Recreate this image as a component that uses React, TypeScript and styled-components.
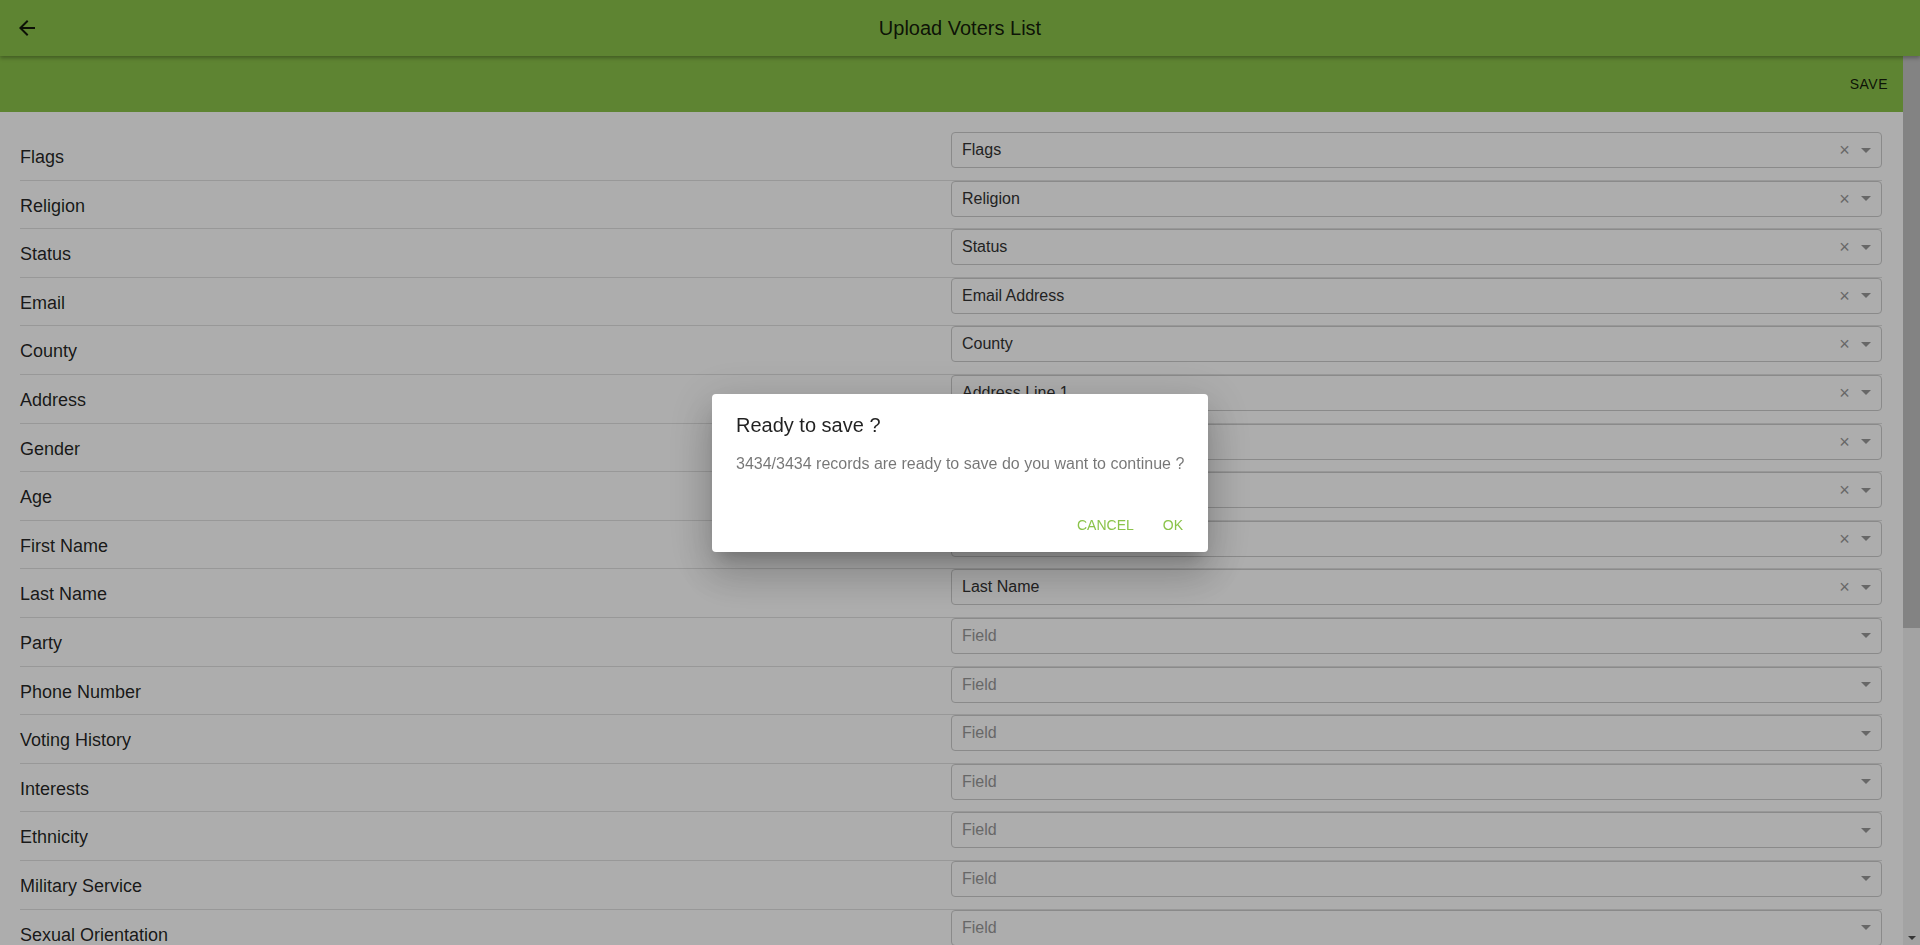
import { FC } from 'react'
import styled, { createGlobalStyle } from 'styled-components'

type FieldRow = {
  label: string
  value?: string
}

const rows: FieldRow[] = [
  { label: 'Flags', value: 'Flags' },
  { label: 'Religion', value: 'Religion' },
  { label: 'Status', value: 'Status' },
  { label: 'Email', value: 'Email Address' },
  { label: 'County', value: 'County' },
  { label: 'Address', value: 'Address Line 1' },
  { label: 'Gender', value: 'Gender' },
  { label: 'Age', value: 'Age' },
  { label: 'First Name', value: 'First Name' },
  { label: 'Last Name', value: 'Last Name' },
  { label: 'Party' },
  { label: 'Phone Number' },
  { label: 'Voting History' },
  { label: 'Interests' },
  { label: 'Ethnicity' },
  { label: 'Military Service' },
  { label: 'Sexual Orientation' },
  { label: 'Date of Birth' },
  { label: 'Zip Code' },
  { label: 'City' },
  { label: 'State' },
  { label: 'Precinct' },
  { label: 'Voter ID' },
  { label: 'Middle Name' },
  { label: 'Registration Date' },
  { label: 'Employer' },
]

const GlobalStyle = createGlobalStyle`
  html, body {
    margin: 0;
    padding: 0;
    height: 100%;
    overflow: hidden;
  }

  body {
    font-family: 'Liberation Sans', Arial, sans-serif;
    background: #fff;
    color: rgba(0, 0, 0, 0.87);
  }

  * {
    box-sizing: border-box;
  }
`

const BackIcon: FC = () => (
  <svg width="24" height="24" viewBox="0 0 24 24" fill="currentColor">
    <path d="M20 11H7.83l5.59-5.59L12 4l-8 8 8 8 1.41-1.41L7.83 13H20v-2z" />
  </svg>
)

const App: FC = () => {
  return (
    <>
      <GlobalStyle />
      <Page>
        <AppBar>
          <BackButton>
            <BackIcon />
          </BackButton>
          <AppTitle>Upload Voters List</AppTitle>
        </AppBar>

        <Body>
          <Scroller>
            <ActionBar>
              <SaveButton>SAVE</SaveButton>
            </ActionBar>

            <FieldList>
              {rows.map((row) => (
                <Row key={row.label}>
                  <Label>{row.label}</Label>
                  <Select>
                    <SelectValue $placeholder={!row.value}>{row.value ?? 'Field'}</SelectValue>
                    {row.value && <ClearMark>×</ClearMark>}
                    <ArrowWrap>
                      <Arrow />
                    </ArrowWrap>
                  </Select>
                </Row>
              ))}
            </FieldList>
          </Scroller>

          {/* window scrollbar, drawn since the native one is hidden */}
          <ScrollRail>
            <ScrollThumb />
            <ScrollDown>
              <ScrollArrow />
            </ScrollDown>
          </ScrollRail>
        </Body>
      </Page>

      <Backdrop>
        <Dialog>
          <DialogTitle>Ready to save ?</DialogTitle>
          <DialogText>3434/3434 records are ready to save do you want to continue ?</DialogText>
          <DialogActions>
            <TextButton>CANCEL</TextButton>
            <TextButton>OK</TextButton>
          </DialogActions>
        </Dialog>
      </Backdrop>
    </>
  )
}

const Page = styled.div`
  display: flex;
  flex-direction: column;
  height: 100vh;
`

const AppBar = styled.header`
  position: relative;
  z-index: 2;
  display: flex;
  align-items: center;
  justify-content: center;
  flex: 0 0 56px;
  height: 56px;
  background: #8bc34a;
  box-shadow: 0 2px 4px rgba(0, 0, 0, 0.3);
`

const BackButton = styled.button`
  position: absolute;
  left: 15px;
  top: 16px;
  display: flex;
  padding: 0;
  border: none;
  background: none;
  color: rgba(0, 0, 0, 0.87);
`

const AppTitle = styled.h1`
  margin: 0;
  font-size: 20px;
  font-weight: 400;
  color: rgba(0, 0, 0, 0.87);
`

const Body = styled.div`
  flex: 1;
  display: flex;
  min-height: 0;
`

const Scroller = styled.main`
  flex: 1;
  overflow-y: auto;
  scrollbar-width: none;

  &::-webkit-scrollbar {
    display: none;
  }
`

const ScrollRail = styled.div`
  display: flex;
  flex-direction: column;
  flex: 0 0 17px;
  background: #f1f1f1;
`

const ScrollThumb = styled.div`
  height: 572px;
  background: #c1c1c1;
`

const ScrollDown = styled.div`
  display: flex;
  align-items: center;
  justify-content: center;
  height: 17px;
  margin-top: auto;
`

const ScrollArrow = styled.span`
  width: 0;
  height: 0;
  margin-top: 3px;
  border-style: solid;
  border-width: 4px 4px 0;
  border-color: #505050 transparent transparent;
`

const ActionBar = styled.div`
  display: flex;
  align-items: center;
  justify-content: flex-end;
  height: 56px;
  padding-right: 15px;
  background: #8bc34a;
`

const SaveButton = styled.button`
  padding: 0;
  border: none;
  background: none;
  font-family: inherit;
  font-size: 14px;
  letter-spacing: 0.5px;
  color: rgba(0, 0, 0, 0.87);
`

const FieldList = styled.div`
  padding: 20px 21px 16px 20px;
`

const Row = styled.div`
  display: grid;
  grid-template-columns: 1fr 1fr;
  height: 48.6px;
  border-bottom: 1px solid #e0e0e0;
`

const Label = styled.div`
  padding-top: 15px;
  font-size: 18px;
  color: rgba(0, 0, 0, 0.87);
`

const Select = styled.div`
  display: flex;
  align-items: center;
  min-width: 0;
  height: 36px;
  padding-left: 10px;
  border: 1px solid #ccc;
  border-radius: 4px;
  background: #fff;
`

const SelectValue = styled.span<{ $placeholder: boolean }>`
  flex: 1;
  font-size: 16px;
  color: ${(props) => (props.$placeholder ? '#999' : '#333')};
`

const ClearMark = styled.span`
  width: 17px;
  margin-right: 3px;
  text-align: center;
  font-size: 18px;
  line-height: 1;
  color: #999;
`

const ArrowWrap = styled.span`
  display: flex;
  justify-content: center;
  width: 25px;
  padding-right: 5px;
`

const Arrow = styled.span`
  width: 0;
  height: 0;
  border-style: solid;
  border-width: 5px 5px 0;
  border-color: #999 transparent transparent;
`

const Backdrop = styled.div`
  position: fixed;
  inset: 0;
  z-index: 10;
  display: flex;
  align-items: center;
  justify-content: center;
  background: rgba(0, 0, 0, 0.32);
`

const Dialog = styled.div`
  width: 496px;
  padding: 20px 24px 19px 24px;
  border-radius: 4px;
  background: #fff;
  box-shadow:
    0 11px 15px -7px rgba(0, 0, 0, 0.2),
    0 24px 38px 3px rgba(0, 0, 0, 0.14),
    0 9px 46px 8px rgba(0, 0, 0, 0.12);
`

const DialogTitle = styled.h2`
  margin: 0 0 18px;
  font-size: 20px;
  font-weight: 400;
  color: rgba(0, 0, 0, 0.87);
`

const DialogText = styled.p`
  margin: 0;
  font-size: 16px;
  white-space: nowrap;
  color: rgba(0, 0, 0, 0.54);
`

const DialogActions = styled.div`
  display: flex;
  justify-content: flex-end;
  gap: 29px;
  margin-top: 44px;
  padding-right: 1px;
`

const TextButton = styled.button`
  padding: 0;
  border: none;
  background: none;
  font-family: inherit;
  font-size: 14px;
  color: #8bc34a;
  cursor: pointer;
`

export default App
